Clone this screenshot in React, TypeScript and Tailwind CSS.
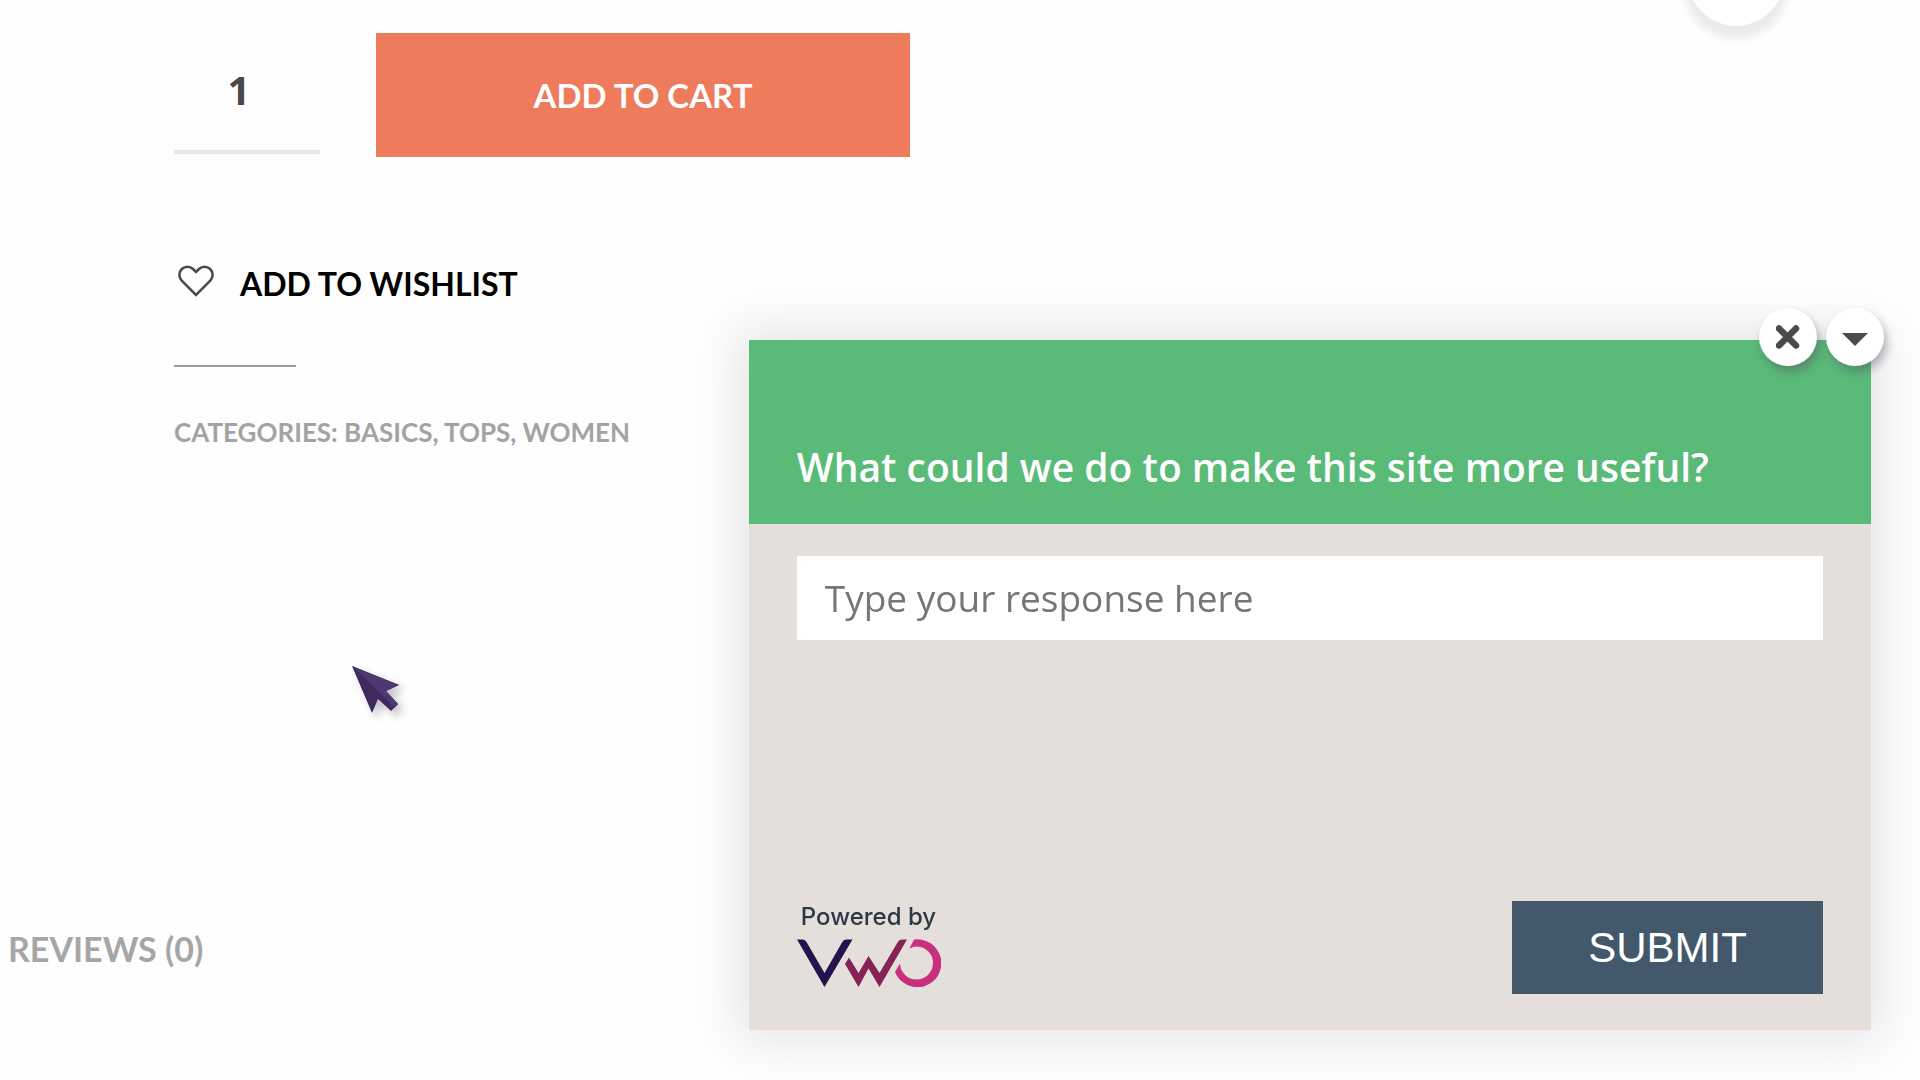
import { useState } from "react";

const CursorArrow = () => (
  <svg
    className="pointer-events-none absolute left-[350px] top-[664px] h-[60px] w-[60px] drop-shadow-[5px_5px_4px_rgba(60,50,60,0.3)]"
    viewBox="0 0 60 60"
    aria-hidden="true"
  >
    <path d="M2 2 L49 21 L36 27 L48 40 L41 47 L28 35 L22 49 Z" fill="#3e2a5e" />
    <path d="M2 2 L49 21 L36 27 L48 40 L45 43.500 Z" fill="#4a3a70" />
  </svg>
);

const VwoLogo = () => (
  <svg className="h-12 w-36" viewBox="0 0 144 48" role="img" aria-label="VWO">
    <path d="M0 0.500 H6 Q8 0.500 9.500 3 L27.500 34 L45 3.500 Q46.500 0.500 49 0.500 H55.500 L27.500 48 Z" fill="#26134d" />
    <path d="M48 25 L52 18.500 L61.500 34 L71.500 17 L82.500 34 L100.500 3.500 Q102 0.500 104.500 0.500 H110 L82.500 48 L71.500 29.500 L61.500 48 Z" fill="#872255" />
    <path
      d="M117 0.500 A24 24 0 1 1 98 33 L103 24.500 A16.500 16.500 0 1 0 120 7.500 Q116 7.500 112.500 9.500 Z"
      fill="#c82f7e"
    />
  </svg>
);

const ProductDetails = () => {
  const [quantity, setQuantity] = useState("1");

  return (
    <main className="pt-[33px] font-['Lato',sans-serif] font-bold">
      <div className="pl-[174px]">
        <div className="flex h-[124px] gap-14">
          <input
            type="text"
            aria-label="Quantity"
            value={quantity}
            onChange={(e) => setQuantity(e.target.value)}
            className="h-[121px] w-[146px] border-b-4 border-[#e7e7e7] bg-transparent pb-1 pr-4 text-center font-['Open_Sans',sans-serif] text-[40px] text-[#4a4a4a] outline-none"
          />
          <button type="button" className="w-[534px] bg-[#ee7b5b] pt-0.5 text-[33px] text-white">
            ADD TO CART
          </button>
        </div>

        <button type="button" className="mt-[103px] flex h-12 items-center gap-[26px] pl-1 text-[32px] text-black">
          <svg className="mb-1.5 h-8 w-9" viewBox="0 0 36 32" fill="none" stroke="#4a4a4a" strokeWidth="2.5" aria-hidden="true">
            <path d="M18 30 L3.500 15.500 C0.500 12 0.800 7 3.800 4 C7 1 12 1 15 4 L18 7 L21 4 C24 1 29 1 32.200 4 C35.200 7 35.500 12 32.500 15.500 Z" />
          </svg>
          ADD TO WISHLIST
        </button>

        <hr className="mt-[57px] w-[122px] border-t-2 border-[#9b9b9b]" />

        <p className="mt-11 text-[26px] leading-[42px] text-[#a3a3a3]">CATEGORIES: BASICS, TOPS, WOMEN</p>
      </div>

      <h2 className="mt-[472px] pl-2 text-[34px] leading-[48px] text-[#a6a6a6]">REVIEWS (0)</h2>
    </main>
  );
};

const SurveyWidget = () => {
  const [response, setResponse] = useState("");

  return (
    <section className="fixed bottom-[50px] left-[39%] right-[49px] bg-[#e4dfdb] shadow-[0_0_48px_12px_rgba(0,0,0,0.1)]">
      <div className="absolute -right-[13px] -top-8 flex gap-[9px]">
        <button
          type="button"
          aria-label="Close"
          className="flex h-[58px] w-[58px] items-center justify-center rounded-full bg-white shadow-[3px_6px_10px_rgba(80,70,90,0.4)]"
        >
          <svg className="h-6 w-6" viewBox="0 0 24 24" stroke="#4a4a4a" strokeWidth="6.500" strokeLinecap="round">
            <path d="M3 3.500 L20 20.500 M20 3.500 L3 20.500" />
          </svg>
        </button>
        <button
          type="button"
          aria-label="Minimise"
          className="flex h-[58px] w-[58px] items-center justify-center rounded-full bg-white shadow-[3px_6px_10px_rgba(80,70,90,0.4)]"
        >
          <svg className="h-7 w-7" viewBox="0 0 28 28" fill="#4a4a4a">
            <path d="M1 10 H27 L14 23 Z" />
          </svg>
        </button>
      </div>

      <header className="flex h-[184px] items-end bg-[#5aba78] px-12 pb-7">
        <h3 className="font-['Open_Sans',sans-serif] text-[39px] font-semibold leading-[58px] text-white">
          What could we do to make this site more useful?
        </h3>
      </header>

      <div className="px-12 pb-9 pt-8">
        <input
          type="text"
          aria-label="Your response"
          placeholder="Type your response here"
          value={response}
          onChange={(e) => setResponse(e.target.value)}
          className="h-[84px] w-full bg-white px-7 pb-0.5 font-['Open_Sans',sans-serif] text-[37px] text-[#4a4a4a] outline-none placeholder:text-[#767676]"
        />
        <div className="mt-[261px] flex items-start justify-between">
          <a href="#" className="block">
            <span className="block pl-1 font-['Inter',sans-serif] text-[24px] font-medium leading-[32px] text-[#2f3744]">Powered by</span>
            <span className="mt-1.5 block">
              <VwoLogo />
            </span>
          </a>
          <button type="button" className="h-[93px] w-[311px] bg-[#43586b] font-['Liberation_Sans',sans-serif] text-[42px] text-white">
            SUBMIT
          </button>
        </div>
      </div>
    </section>
  );
};

const App = () => {
  return (
    <div className="relative min-h-screen overflow-hidden bg-[#fefefe]">
      {/* round floating button, mostly scrolled out of view */}
      <div className="absolute -top-[70px] right-[136px] h-24 w-24 rounded-full bg-white shadow-[0_9px_9px_4px_rgba(0,0,0,0.08)]" />
      <ProductDetails />
      <CursorArrow />
      <SurveyWidget />
    </div>
  );
};

export default App;
